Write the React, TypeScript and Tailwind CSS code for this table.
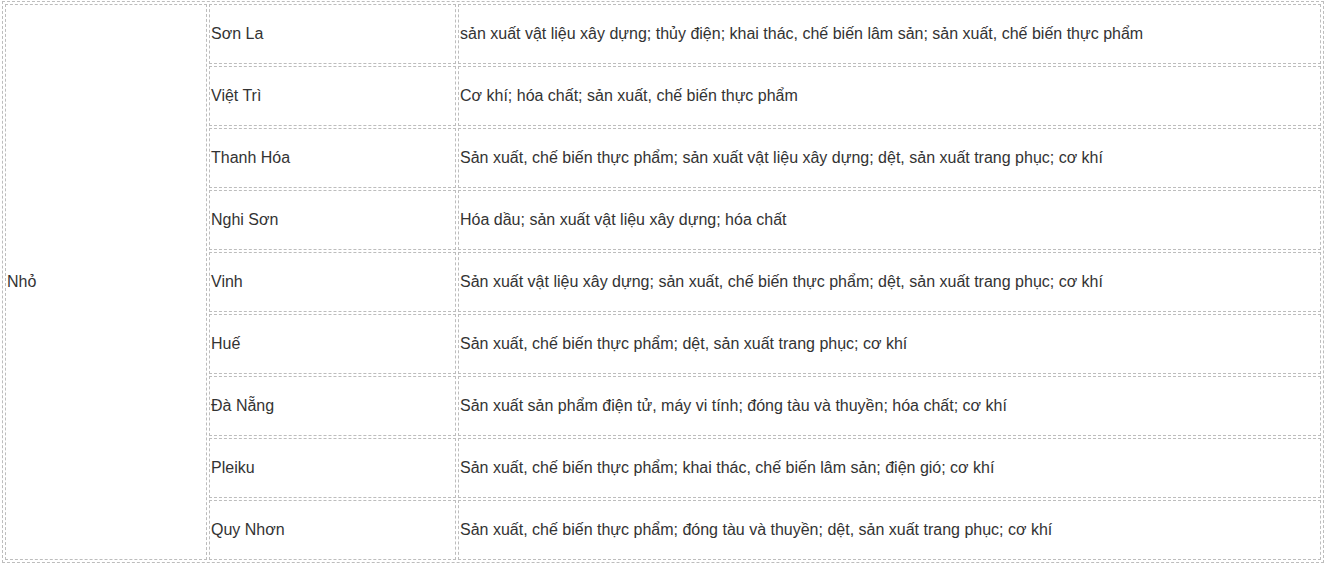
const rows: [string, string][] = [
  ['Sơn La', 'sản xuất vật liệu xây dựng; thủy điện; khai thác, chế biến lâm sản; sản xuất, chế biến thực phẩm'],
  ['Việt Trì', 'Cơ khí; hóa chất; sản xuất, chế biến thực phẩm'],
  ['Thanh Hóa', 'Sản xuất, chế biến thực phẩm; sản xuất vật liệu xây dựng; dệt, sản xuất trang phục; cơ khí'],
  ['Nghi Sơn', 'Hóa dầu; sản xuất vật liệu xây dựng; hóa chất'],
  ['Vinh', 'Sản xuất vật liệu xây dựng; sản xuất, chế biến thực phẩm; dệt, sản xuất trang phục; cơ khí'],
  ['Huế', 'Sản xuất, chế biến thực phẩm; dệt, sản xuất trang phục; cơ khí'],
  ['Đà Nẵng', 'Sản xuất sản phẩm điện tử, máy vi tính; đóng tàu và thuyền; hóa chất; cơ khí'],
  ['Pleiku', 'Sản xuất, chế biến thực phẩm; khai thác, chế biến lâm sản; điện gió; cơ khí'],
  ['Quy Nhơn', 'Sản xuất, chế biến thực phẩm; đóng tàu và thuyền; dệt, sản xuất trang phục; cơ khí'],
];

const cell = 'border border-dashed border-[#bdbdbd] p-[1px] align-middle h-[60px]';

export default function App() {
  return (
    <div className="bg-white min-h-[565px] pl-[2px] pt-[1px] font-['Liberation_Sans',Arial,sans-serif] text-[16px] text-[#333333]">
      <table className="border-separate border-spacing-[2px] border border-dashed border-[#bdbdbd] w-[1322px]">
        <tbody>
          {rows.map(([city, industry], i) => (
            <tr key={city}>
              {i === 0 && (
                <td rowSpan={rows.length} className={`${cell} w-[202px]`}>
                  Nhỏ
                </td>
              )}
              <td className={`${cell} w-[247px]`}>{city}</td>
              <td className={cell}>{industry}</td>
            </tr>
          ))}
        </tbody>
      </table>
    </div>
  );
}
